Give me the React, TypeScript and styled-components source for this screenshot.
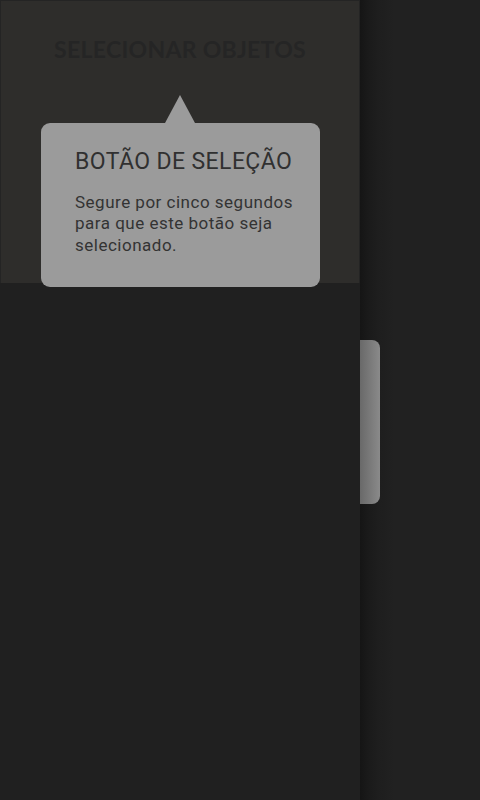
import React from "react";
import styled, { createGlobalStyle } from "styled-components";

const Global = createGlobalStyle`
  html, body { margin: 0; padding: 0; background: #212121; }
  #root { width: 480px; height: 800px; }
`;

const Page = styled.div`
  display: flex;
  width: 480px;
  height: 800px;
  overflow: hidden;
  font-family: Roboto, "Noto Sans", sans-serif;
`;

const Drawer = styled.aside`
  position: relative;
  width: 360px;
  flex: none;
  display: flex;
  flex-direction: column;
  background: #202020;
`;

const Header = styled.header`
  height: 283px;
  box-sizing: border-box;
  background: #2e2d2b;
  border: 1px solid #242424;
  border-bottom: none;
  padding-top: 34px;
  text-align: center;
`;

const HeaderTitle = styled.h1`
  margin: 0;
  font-family: Lato, "Open Sans", sans-serif;
  font-weight: 700;
  font-size: 23px;
  line-height: 28px;
  letter-spacing: 0.3px;
  color: #252525;
`;

const Tooltip = styled.div`
  position: absolute;
  left: 41px;
  top: 123px;
  width: 279px;
  height: 164px;
  box-sizing: border-box;
  padding: 25px 16px 0 34px;
  background: #9b9b9b;
  border-radius: 9px;
  color: #303030;

  &::before {
    content: "";
    position: absolute;
    left: 124px;
    top: -28px;
    border-left: 15.5px solid transparent;
    border-right: 15.5px solid transparent;
    border-bottom: 28px solid #9b9b9b;
  }
`;

const TipTitle = styled.h2`
  margin: 0;
  font-family: Roboto, sans-serif;
  font-weight: 400;
  font-size: 23px;
  line-height: 28px;
  letter-spacing: 0.4px;
  color: #303030;
`;

const TipBody = styled.p`
  margin: 16px 0 0;
  font-family: Roboto, sans-serif;
  font-size: 17px;
  line-height: 21.4px;
  letter-spacing: 0.5px;
  color: #333333;
`;

const Side = styled.div`
  flex: 1;
  padding-top: 340px;
  background: linear-gradient(
    to right,
    #151515 0px,
    #1a1a1a 8px,
    #1e1e1e 18px,
    #212121 34px
  );
`;

const Handle = styled.div`
  width: 20px;
  height: 164px;
  border-radius: 0 8px 8px 0;
  background: linear-gradient(to right, #696969, #8a8a8a);
`;

export default function App() {
  return (
    <>
      <Global />
      <Page>
        <Drawer>
          <Header>
            <HeaderTitle>SELECIONAR OBJETOS</HeaderTitle>
          </Header>
          <Tooltip>
            <TipTitle>BOTÃO DE SELEÇÃO</TipTitle>
            <TipBody>
              Segure por cinco segundos para que este botão seja selecionado.
            </TipBody>
          </Tooltip>
        </Drawer>
        <Side>
          <Handle />
        </Side>
      </Page>
    </>
  );
}
